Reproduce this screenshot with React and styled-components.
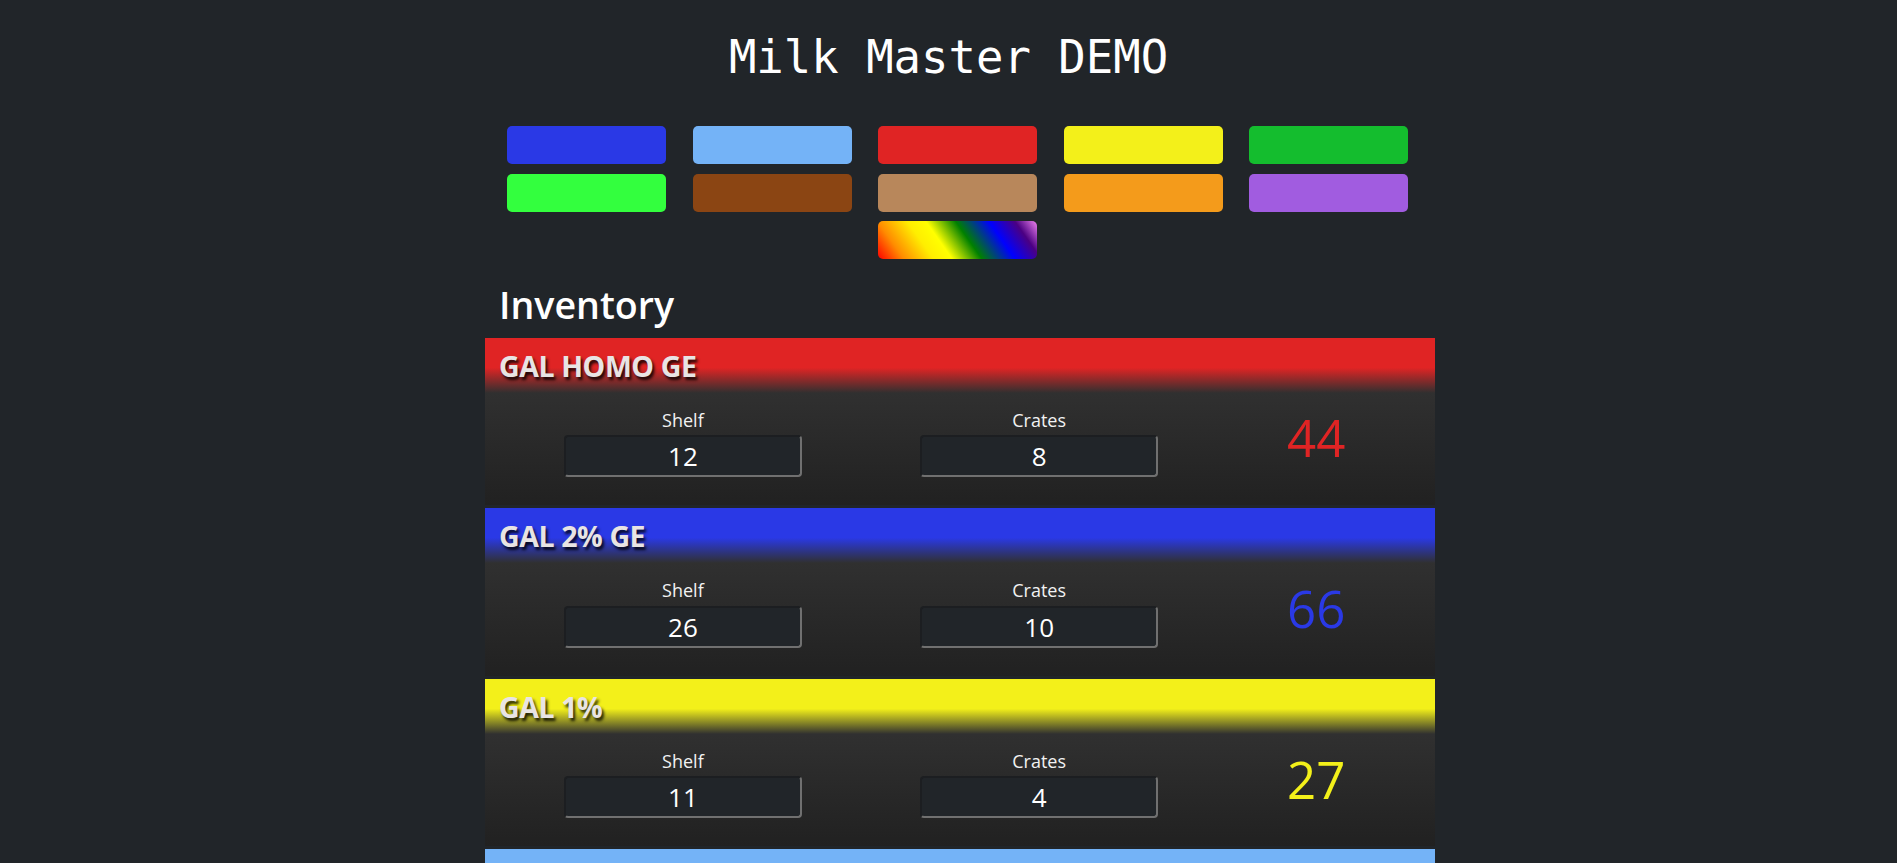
import React from "react";
import styled, { createGlobalStyle } from "styled-components";

const GlobalStyle = createGlobalStyle`
  html, body {
    margin: 0;
    padding: 0;
    background: #212529;
    color: #ffffff;
    font-family: "Open Sans", "Noto Sans", sans-serif;
  }
  * { box-sizing: border-box; }
`;

const Page = styled.div`
  min-height: 100vh;
  background: #212529;
  padding-bottom: 40px;
`;

const Title = styled.h1`
  margin: 31px 0 0;
  font-family: "DejaVu Sans Mono", "Liberation Mono", monospace;
  font-weight: 400;
  font-size: 45.6px;
  line-height: normal;
  text-align: center;
  color: #ffffff;
`;

const MainWrap = styled.div`
  display: flex;
  justify-content: center;
  padding-left: 23px;
  margin-top: 42px;
`;

const Main = styled.main`
  width: 950px;
  display: flex;
  flex-direction: column;
`;

const Palette = styled.div`
  display: grid;
  grid-template-columns: repeat(5, 159px);
  column-gap: 26.5px;
  row-gap: 9.5px;
  padding-left: 22px;
`;

const ColorButton = styled.button`
  height: 38px;
  border: none;
  border-radius: 5px;
  padding: 0;
  cursor: pointer;
  background: ${(p) => p.$bg};
  grid-column: ${(p) => p.$col || "auto"};
`;

const Heading = styled.h2`
  margin: 22.5px 0 0;
  padding-left: 14px;
  font-size: 37.6px;
  font-weight: 600;
  line-height: 1.2;
  color: #ffffff;
`;

const CardList = styled.div`
  display: flex;
  flex-direction: column;
  gap: 3px;
  margin-top: 11px;
`;

const Card = styled.section`
  display: flex;
  flex-direction: column;
`;

const CardHeader = styled.div`
  height: 55px;
  padding: 13px 0 0 14px;
  background: linear-gradient(
    to bottom,
    ${(p) => p.$color} 0%,
    ${(p) => p.$color} 54%,
    #303030 100%
  );
`;

const CardTitle = styled.h3`
  margin: 0;
  font-size: 28.5px;
  font-weight: 700;
  line-height: 1.1;
  color: #e8e4e4;
  text-shadow: 2px 3px 3px rgba(0, 0, 0, 0.85);
  letter-spacing: -0.4px;
`;

const CardBody = styled.div`
  display: grid;
  grid-template-columns: 5fr 4fr 3fr;
  align-items: center;
  padding: 14px 0 28px;
  background: linear-gradient(to bottom, #303030 0%, #212121 100%);
`;

const Field = styled.label`
  display: flex;
  flex-direction: column;
  align-items: center;
`;

const FieldLabel = styled.span`
  font-size: 18px;
  line-height: 27px;
  margin-bottom: 1.6px;
  color: #f2f2f2;
`;

const NumberInput = styled.input`
  width: 238px;
  height: 42px;
  background: #212529;
  color: #ffffff;
  text-align: center;
  font-family: "Open Sans", "Noto Sans", sans-serif;
  font-size: 26px;
  border-radius: 4px;
  border: 2px solid;
  border-color: #1c1e21 #707070 #707070 #1c1e21;
  outline: none;
  padding: 0 8px;
`;

const Total = styled.div`
  text-align: center;
  font-size: 51px;
  font-weight: 500;
  line-height: 1;
  color: ${(p) => p.$color};
  margin-top: -8px;
`;

const RED = "#e02424";
const BLUE = "#2a39e6";
const YELLOW = "#f3f01a";
const LIGHTBLUE = "#74b3f7";

const palette = [
  BLUE,
  LIGHTBLUE,
  RED,
  YELLOW,
  "#14bd2e",
  "#33ff3e",
  "#8b4513",
  "#b8875b",
  "#f49b1b",
  "#a15ce0",
];

const rainbow =
  "linear-gradient(55deg, #ff0000 0%, #ff8c00 14%, #ffee00 30%, #ffff00 40%, #008000 56%, #0000ff 74%, #4b0082 88%, #ee82ee 100%)";

const items = [
  { name: "GAL HOMO GE", color: RED, shelf: 12, crates: 8 },
  { name: "GAL 2% GE", color: BLUE, shelf: 26, crates: 10 },
  { name: "GAL 1%", color: YELLOW, shelf: 11, crates: 4 },
  { name: "GAL SKIM", color: LIGHTBLUE, shelf: 9, crates: 3 },
];

function InventoryCard({ item }) {
  const total = item.shelf + item.crates * 4;
  return (
    <Card>
      <CardHeader $color={item.color}>
        <CardTitle>{item.name}</CardTitle>
      </CardHeader>
      <CardBody>
        <Field>
          <FieldLabel>Shelf</FieldLabel>
          <NumberInput type="text" value={item.shelf} readOnly />
        </Field>
        <Field>
          <FieldLabel>Crates</FieldLabel>
          <NumberInput type="text" value={item.crates} readOnly />
        </Field>
        <Total $color={item.color}>{total}</Total>
      </CardBody>
    </Card>
  );
}

export default function App() {
  return (
    <Page>
      <GlobalStyle />
      <Title>Milk Master DEMO</Title>
      <MainWrap>
        <Main>
          <Palette>
            {palette.map((c) => (
              <ColorButton key={c} $bg={c} aria-label={c} />
            ))}
            <ColorButton $bg={rainbow} $col={3} aria-label="rainbow" />
          </Palette>
          <Heading>Inventory</Heading>
          <CardList>
            {items.map((it) => (
              <InventoryCard key={it.name} item={it} />
            ))}
          </CardList>
        </Main>
      </MainWrap>
    </Page>
  );
}
